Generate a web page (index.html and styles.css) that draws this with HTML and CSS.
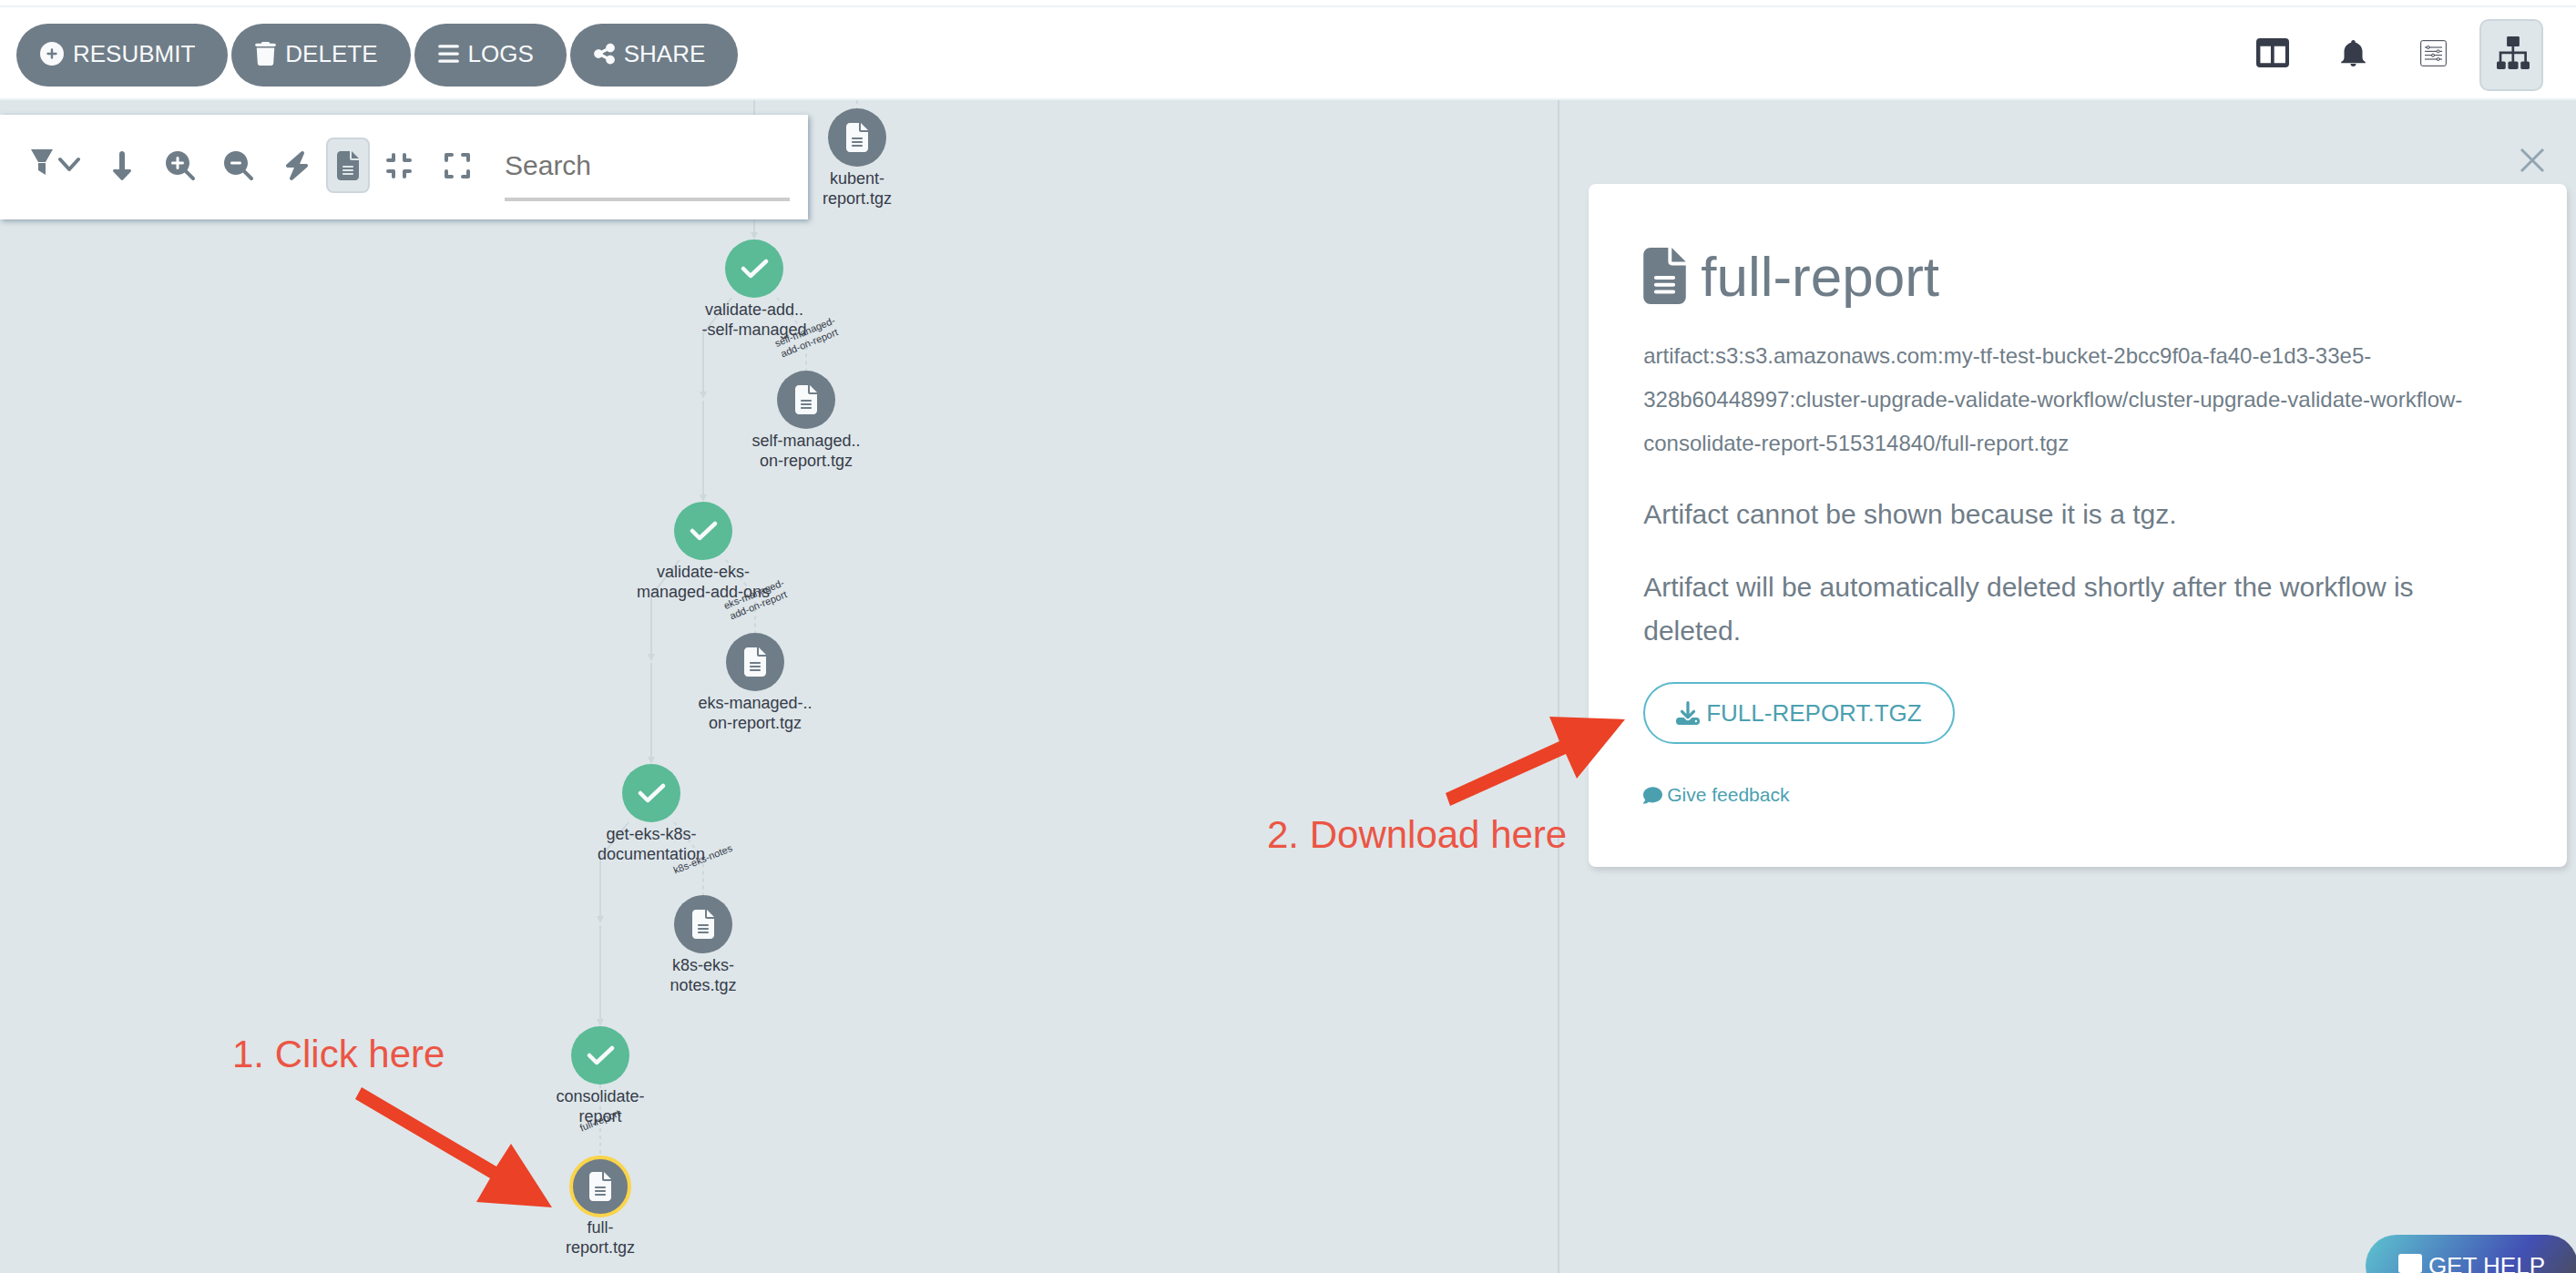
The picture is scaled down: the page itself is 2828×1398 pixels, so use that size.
FILE: index.html
```html
<!DOCTYPE html>
<html lang="en">
<head>
<meta charset="utf-8">
<title>Workflow details</title>
<link rel="stylesheet" href="styles.css">
</head>
<body>
<svg class="sprite" aria-hidden="true">
  <symbol id="file" viewBox="0 0 384 512"><path d="M64 0C28.700 0 0 28.700 0 64V448c0 35.300 28.700 64 64 64H320c35.300 0 64-28.700 64-64V160H256c-17.700 0-32-14.300-32-32V0H64zM256 0V128H384L256 0zM112 256H272c8.800 0 16 7.200 16 16s-7.200 16-16 16H112c-8.800 0-16-7.200-16-16s7.200-16 16-16zm0 64H272c8.800 0 16 7.200 16 16s-7.200 16-16 16H112c-8.800 0-16-7.200-16-16s7.200-16 16-16zm0 64H272c8.800 0 16 7.200 16 16s-7.200 16-16 16H112c-8.800 0-16-7.200-16-16s7.200-16 16-16z"/></symbol>
  <symbol id="check" viewBox="-16 -16 32 32"><path d="M-12 0L-4 8L13-8" fill="none" stroke="currentColor" stroke-width="4.500" stroke-linecap="round" stroke-linejoin="round"/></symbol>
</svg>

<header class="topbar">
  <div class="actions">
    <button class="pill" type="button"><svg class="ico-26" viewBox="0 0 512 512"><path d="M256 512A256 256 0 1 0 256 0a256 256 0 1 0 0 512zM232 344V280H168c-13.300 0-24-10.700-24-24s10.700-24 24-24h64V168c0-13.300 10.700-24 24-24s24 10.700 24 24v64h64c13.300 0 24 10.700 24 24s-10.700 24-24 24H280v64c0 13.300-10.700 24-24 24s-24-10.700-24-24z"/></svg>RESUBMIT</button>
    <button class="pill" type="button"><svg class="ico-23" viewBox="0 0 448 512"><path d="M135.200 17.700L128 32H32C14.300 32 0 46.300 0 64S14.300 96 32 96H416c17.700 0 32-14.300 32-32s-14.300-32-32-32H320l-7.200-14.300C307.400 6.800 296.300 0 284.200 0H163.800c-12.100 0-23.200 6.800-28.600 17.700zM416 128H32L53.200 467c1.600 25.300 22.600 45 47.900 45H346.900c25.300 0 46.300-19.700 47.900-45L416 128z"/></svg>DELETE</button>
    <button class="pill" type="button"><svg class="ico-23" viewBox="0 0 448 512"><path d="M32 96H416M32 256H416M32 416H416" fill="none" stroke="currentColor" stroke-width="64" stroke-linecap="round"/></svg>LOGS</button>
    <button class="pill" type="button"><svg class="ico-23" viewBox="0 0 448 512"><path d="M352 224c53 0 96-43 96-96s-43-96-96-96s-96 43-96 96c0 4 .2 8 .7 11.900l-94.100 47C145.400 170.200 121.900 160 96 160c-53 0-96 43-96 96s43 96 96 96c25.900 0 49.400-10.200 66.600-26.900l94.100 47c-.5 3.900-.7 7.800-.7 11.900c0 53 43 96 96 96s96-43 96-96s-43-96-96-96c-25.900 0-49.400 10.200-66.600 26.900l-94.100-47c.5-3.900 .7-7.800 .7-11.900s-.2-8-.7-11.900l94.100-47C302.600 213.800 326.100 224 352 224z"/></svg>SHARE</button>
  </div>
  <div class="views">
    <button class="view" type="button" aria-label="Summary"><svg width="36" height="32" viewBox="0 0 106 94"><path fill-rule="evenodd" d="M12 0H94Q106 0 106 12V82Q106 94 94 94H12Q0 94 0 82V12Q0 0 12 0zM13 26V80H47V26zM58 26V80H94V26z"/></svg></button>
    <button class="view" type="button" aria-label="Events"><svg width="27" height="29" viewBox="0 0 80 87"><path d="M40 0c4 0 7 3 7 8 14 4 22 15 23 28v20c0 8 3 12 10 16v4H0v-4c7-4 10-8 10-16V36C11 23 19 12 33 8c0-5 3-8 7-8zM31 78h18c0 6-4 9-9 9s-9-3-9-9z"/></svg></button>
    <button class="view" type="button" aria-label="Parameters"><svg width="29" height="29" viewBox="0 0 87 87"><g fill="#fff" stroke="currentColor" stroke-width="3"><rect x="2" y="2" width="83" height="83" rx="6"/><path d="M15 24H72M15 37H72M15 50H72M15 63H72"/><circle cx="26" cy="24" r="4.500"/><circle cx="59" cy="37" r="4.500"/><circle cx="42" cy="50" r="4.500"/><circle cx="59" cy="63" r="4.500"/></g></svg></button>
    <button class="view view-on" type="button" aria-label="Workflow graph"><svg width="36" height="36" viewBox="0 0 107 107"><rect x="33" width="41" height="33" rx="4"/><rect y="82" width="29" height="25" rx="5"/><rect x="37" y="82" width="33" height="25" rx="5"/><rect x="78" y="82" width="29" height="25" rx="5"/><path d="M53 30V84M12 84V53H94V84" fill="none" stroke="currentColor" stroke-width="8"/></svg></button>
  </div>
</header>

<main class="workspace">
  <section class="graph-pane">
    <svg class="graph" role="group" aria-label="Workflow graph">
      <g transform="translate(0 -110)">
        <g class="edges">
          <path d="M828 110V256M803 327L772 366V430M772 440V544M746 615L715 654V718M715 728V832M690 903L659 942V1006M659 1016V1120"/>
          <path class="dashed" d="M941 110V119M853 327L877 357Q885 366 885 376V407M797 615L821 645Q829 654 829 664V695M740 903L764 933Q772 942 772 952V983M659 1191V1269"/>
        </g>
        <path class="heads" d="M824 255h8l-4 8zM768 430h8l-4 8zM768 543h8l-4 8zM711 718h8l-4 8zM711 831h8l-4 8zM655 1006h8l-4 8zM655 1119h8l-4 8z"/>

        <g class="node" transform="translate(941 151)"><circle r="32"/><use href="#file" x="-12" y="-16" width="24" height="32"/><text y="51">kubent-</text><text y="73">report.tgz</text></g>
        <g class="node done" transform="translate(828 295)"><circle r="32"/><use href="#check" x="-16" y="-16" width="32" height="32"/><text y="51">validate-add..</text><text y="73">-self-managed</text></g>
        <g class="node" transform="translate(885 439)"><circle r="32"/><use href="#file" x="-12" y="-16" width="24" height="32"/><text y="51">self-managed..</text><text y="73">on-report.tgz</text></g>
        <g class="node done" transform="translate(772 583)"><circle r="32"/><use href="#check" x="-16" y="-16" width="32" height="32"/><text y="51">validate-eks-</text><text y="73">managed-add-ons</text></g>
        <g class="node" transform="translate(829 727)"><circle r="32"/><use href="#file" x="-12" y="-16" width="24" height="32"/><text y="51">eks-managed-..</text><text y="73">on-report.tgz</text></g>
        <g class="node done" transform="translate(715 871)"><circle r="32"/><use href="#check" x="-16" y="-16" width="32" height="32"/><text y="51">get-eks-k8s-</text><text y="73">documentation</text></g>
        <g class="node" transform="translate(772 1015)"><circle r="32"/><use href="#file" x="-12" y="-16" width="24" height="32"/><text y="51">k8s-eks-</text><text y="73">notes.tgz</text></g>
        <g class="node done" transform="translate(659 1159)"><circle r="32"/><use href="#check" x="-16" y="-16" width="32" height="32"/><text y="51">consolidate-</text><text y="73">report</text></g>
        <g class="node selected" transform="translate(659 1303)"><circle r="32"/><use href="#file" x="-12" y="-16" width="24" height="32"/><text y="51">full-</text><text y="73">report.tgz</text></g>

        <g class="edge-label" transform="translate(885 368) rotate(-22)"><text>self-managed-</text><text y="13">add-on-report</text></g>
        <g class="edge-label" transform="translate(829 656) rotate(-22)"><text>eks-managed-</text><text y="13">add-on-report</text></g>
        <g class="edge-label" transform="translate(773 947) rotate(-22)"><text>k8s-eks-notes</text></g>
        <g class="edge-label" transform="translate(660 1234) rotate(-22)"><text>full-report</text></g>
      </g>
    </svg>

    <div class="toolbar">
      <button class="tool tool-filter" type="button" aria-label="Filter"><svg width="24" height="28" viewBox="0 0 24 28"><path d="M0 0H24L16 14H8zM8 15H16V28L8 23z"/></svg><svg width="24" height="24" viewBox="0 0 24 24"><path d="M2 9L12 20L22 9" fill="none" stroke="currentColor" stroke-width="4" stroke-linecap="round" stroke-linejoin="round"/></svg></button>
      <button class="tool tool-direction" type="button" aria-label="Direction"><svg width="20" height="32" viewBox="0 0 320 512"><path d="M2 334.500c-3.800 8.800-2 19 4.600 26l136 144c4.500 4.800 10.800 7.500 17.400 7.500s12.900-2.700 17.400-7.500l136-144c6.600-7 8.400-17.200 4.600-26s-12.500-14.500-22-14.500H208V48c0-26.500-21.500-48-48-48s-48 21.500-48 48v272H24c-9.600 0-18.200 5.700-22 14.500z"/></svg></button>
      <button class="tool tool-zoom" type="button" aria-label="Zoom in"><svg width="32" height="32" viewBox="0 0 512 512"><path d="M416 208c0 45.900-14.900 88.300-40 122.700L502.600 457.400c12.500 12.500 12.500 32.800 0 45.300s-32.800 12.500-45.300 0L330.700 376c-34.400 25.200-76.800 40-122.700 40C93.100 416 0 322.900 0 208S93.100 0 208 0S416 93.100 416 208zM184 296c0 13.300 10.700 24 24 24s24-10.700 24-24V232h64c13.300 0 24-10.700 24-24s-10.700-24-24-24H232V120c0-13.300-10.700-24-24-24s-24 10.700-24 24v64H120c-13.300 0-24 10.700-24 24s10.700 24 24 24h64v64z"/></svg></button>
      <button class="tool tool-zoom" type="button" aria-label="Zoom out"><svg width="32" height="32" viewBox="0 0 512 512"><path d="M416 208c0 45.900-14.900 88.300-40 122.700L502.600 457.400c12.500 12.500 12.500 32.800 0 45.300s-32.800 12.500-45.300 0L330.700 376c-34.400 25.200-76.800 40-122.700 40C93.100 416 0 322.900 0 208S93.100 0 208 0S416 93.100 416 208zM136 184c-13.300 0-24 10.700-24 24s10.700 24 24 24H280c13.300 0 24-10.700 24-24s-10.700-24-24-24H136z"/></svg></button>
      <button class="tool tool-bolt" type="button" aria-label="Fast rendering"><svg width="28" height="32" viewBox="0 0 448 512"><path d="M349.400 44.600c5.900-13.700 1.500-29.700-10.600-38.500s-28.600-8-39.900 1.800l-256 224c-10 8.800-13.600 22.900-8.900 35.300S50.700 288 64 288H175.500L98.600 467.400c-5.900 13.700-1.500 29.700 10.600 38.500s28.600 8 39.900-1.800l256-224c10-8.800 13.600-22.900 8.900-35.300s-16.600-20.700-30-20.700H272.500L349.400 44.600z"/></svg></button>
      <button class="tool tool-on" type="button" aria-label="Show artifacts"><svg width="24" height="32"><use href="#file"/></svg></button>
      <button class="tool" type="button" aria-label="Collapse"><svg width="28" height="32" viewBox="0 0 448 512"><path d="M128 64V160H32M320 64V160H416M32 352H128V448M416 352H320V448" fill="none" stroke="currentColor" stroke-width="64" stroke-linecap="round" stroke-linejoin="round"/></svg></button>
      <button class="tool" type="button" aria-label="Expand"><svg width="28" height="32" viewBox="0 0 448 512"><path d="M128 64H32V160M320 64H416V160M32 352V448H128M416 352V448H320" fill="none" stroke="currentColor" stroke-width="64" stroke-linecap="round" stroke-linejoin="round"/></svg></button>
      <input class="search" type="search" placeholder="Search" aria-label="Search">
    </div>
  </section>

  <aside class="details">
    <button class="close" type="button" aria-label="Close"><svg width="28" height="28" viewBox="0 0 28 28"><path d="M2 2L26 26M26 2L2 26" fill="none" stroke="currentColor" stroke-width="3"/></svg></button>
    <article class="card">
      <h1 class="title"><svg width="47" height="62"><use href="#file"/></svg>full-report</h1>
      <p class="key">artifact:s3:s3.amazonaws.com:my-tf-test-bucket-2bcc9f0a-fa40-e1d3-33e5-328b60448997:cluster-upgrade-validate-workflow/cluster-upgrade-validate-workflow-consolidate-report-515314840/full-report.tgz</p>
      <p class="note">Artifact cannot be shown because it is a tgz.</p>
      <p class="note">Artifact will be automatically deleted shortly after the workflow is deleted.</p>
      <button class="download" type="button"><svg class="ico-26" viewBox="0 0 512 512"><path d="M288 32c0-17.700-14.300-32-32-32s-32 14.300-32 32V274.700l-73.400-73.400c-12.500-12.500-32.800-12.500-45.300 0s-12.500 32.800 0 45.300l128 128c12.500 12.500 32.800 12.500 45.300 0l128-128c12.500-12.500 12.500-32.800 0-45.300s-32.800-12.500-45.300 0L288 274.700V32zM64 352c-35.300 0-64 28.700-64 64v32c0 35.300 28.700 64 64 64H448c35.300 0 64-28.700 64-64V416c0-35.300-28.700-64-64-64H346.500l-45.300 45.300c-25 25-65.500 25-90.500 0L165.500 352H64zm368 56a24 24 0 1 1 0 48 24 24 0 1 1 0-48z"/></svg>FULL-REPORT.TGZ</button>
      <a class="feedback" href="#feedback"><svg width="21" height="21" viewBox="0 0 512 512"><path d="M512 240c0 114.900-114.600 208-256 208c-37.100 0-72.300-6.400-104.100-17.900c-11.900 8.700-31.300 20.600-54.300 30.600C73.600 471.100 44.700 480 16 480c-14 0-20-17-11-27c20-20 42-50 45-82C18 335 0 290 0 240C0 125.100 114.600 32 256 32s256 93.100 256 208z"/></svg>Give feedback</a>
    </article>
  </aside>

  <svg class="notes" role="group" aria-label="Steps">
    <g transform="translate(0 -110)">
      <path d="M397 1194L545 1281L561 1256L606 1326L523 1320L538 1294L390 1207zM1587 871L1712 814L1701 787L1784 790L1731 855L1719 828L1592 885z"/>
      <text x="255" y="1172">1. Click here</text>
      <text x="1391" y="931">2. Download here</text>
    </g>
  </svg>
</main>

<button class="help" type="button"><svg class="ico-26" viewBox="0 0 26 26"><path d="M3 0H23Q26 0 26 3V18Q26 21 23 21H16L10 26V21H3Q0 21 0 18V3Q0 0 3 0z"/></svg>GET HELP</button>
</body>
</html>
```
FILE: styles.css
```css
* { box-sizing: border-box; }

body {
  margin: 0;
  height: 100vh;
  padding-top: 6px;
  display: flex;
  flex-direction: column;
  overflow: hidden;
  background: #fff;
  color: #6f7d88;
  font-family: "Liberation Sans", Arial, sans-serif;
}

button, input { font: inherit; color: inherit; }
button { border: 0; padding: 0; background: none; cursor: pointer; }
svg { fill: currentColor; flex: none; }

.sprite { position: absolute; width: 0; height: 0; }
.ico-26 { width: 26px; height: 26px; }
.ico-23 { width: 23px; height: 26px; }

/* Top bar */
.topbar {
  display: flex;
  justify-content: space-between;
  align-items: center;
  height: 104px;
  padding: 4px 36px 0 18px;
  border-top: 2px solid #edf2f5;
  border-bottom: 2px solid #edf2f5;
}
.actions { display: flex; gap: 4px; }
.pill {
  display: flex;
  align-items: center;
  gap: 10px;
  height: 69px;
  padding: 0 36px 2px 26px;
  border-radius: 35px;
  background: #6f7d88;
  color: #f8fafb;
  font-size: 26px;
}
.views { display: flex; gap: 18px; color: #363c4a; }
.view {
  display: flex;
  align-items: center;
  justify-content: center;
  width: 70px;
  height: 79px;
  padding: 0 0 4px 4px;
}
.view-on {
  border: 2px solid #cdd6dc;
  border-radius: 10px;
  background: #dee6e9;
}

/* Workspace */
.workspace {
  position: relative;
  flex: 1;
  min-height: 0;
  display: grid;
  grid-template-columns: minmax(0, 153fr) minmax(0, 100fr);
  background: #dee6e9;
}
.graph-pane {
  position: relative;
  min-height: 0;
  padding-top: 16px;
}
.graph, .notes {
  position: absolute;
  top: 0;
  left: 0;
  width: 100%;
  height: 100%;
}

.edges { fill: none; stroke: #ced7db; stroke-width: 2; }
.dashed { stroke-dasharray: 4 4; }
.heads { fill: #ced7db; }
.node { color: #f8fafb; text-anchor: middle; font-size: 18px; cursor: pointer; }
.node circle { fill: #6f7d88; }
.node text { fill: #363c4a; }
.done circle { fill: #5abb96; }
.selected circle { stroke: #fad44a; stroke-width: 4; }
.edge-label { text-anchor: middle; font-size: 11px; fill: #363c4a; }

.toolbar {
  position: relative;
  display: flex;
  align-items: center;
  width: max-content;
  height: 115px;
  padding: 0 20px 0 34px;
  background: #fff;
  box-shadow: 2px 2px 6px #8fa4b1;
}
.tool {
  display: flex;
  align-items: center;
  justify-content: center;
  height: 61px;
  margin: 0 36px 4px 0;
}
.tool-filter { gap: 6px; margin-right: 34px; padding-bottom: 8px; }
.tool-direction { width: 24px; }
.tool-zoom { margin-right: 32px; }
.tool-bolt { width: 32px; margin-right: 16px; }
.tool-on {
  width: 48px;
  margin-right: 18px;
  border: 2px solid #cdd6dc;
  border-radius: 8px;
  background: #dee6e9;
}
.search {
  width: 313px;
  height: 74px;
  padding: 0;
  margin-left: 2px;
  border: 0;
  border-bottom: 4px solid #ccc;
  outline: 0;
  background: none;
  font-size: 30px;
  appearance: none;
}
.search::placeholder { color: #757575; opacity: 1; }

/* Details panel */
.details {
  padding: 50px 10px 0 32px;
  border-left: 2px solid #cdd6da;
}
.close {
  display: block;
  height: 36px;
  margin: 0 24px 6px auto;
  color: #92a5b1;
}
.card {
  display: flex;
  flex-direction: column;
  align-items: flex-start;
  padding: 60px 60px 62px;
  border-radius: 8px;
  background: #fff;
  box-shadow: 2px 4px 6px #c4cbd0;
}
.title {
  display: flex;
  align-items: center;
  gap: 16px;
  height: 82px;
  margin: 0 0 23px;
  font-size: 62px;
  font-weight: 400;
}
.key {
  margin: 0 0 30px;
  font-size: 24px;
  line-height: 48px;
  overflow-wrap: anywhere;
}
.note {
  margin: 0 0 32px;
  font-size: 30px;
  line-height: 48px;
}
.download {
  display: flex;
  align-items: center;
  gap: 7px;
  height: 68px;
  padding: 0 34px;
  border: 2px solid #5bb9cd;
  border-radius: 34px;
  color: #4ba0b0;
  font-size: 26px;
}
.feedback {
  display: flex;
  align-items: center;
  gap: 5px;
  margin-top: 39px;
  color: #4ba0b0;
  font-size: 21px;
  line-height: 34px;
  text-decoration: none;
}

/* Step annotations */
.notes { pointer-events: none; font-size: 42px; }
.notes path { fill: #eb4126; }
.notes text { fill: #ec5545; }

.help {
  position: fixed;
  right: -2px;
  bottom: -26px;
  display: flex;
  align-items: center;
  gap: 7px;
  height: 68px;
  padding: 0 36px;
  border-radius: 34px;
  background: linear-gradient(125deg, #5bb9cd 6%, #4250b4 66%, #4a4d62 94%);
  color: #fff;
  font-size: 26px;
}
```
